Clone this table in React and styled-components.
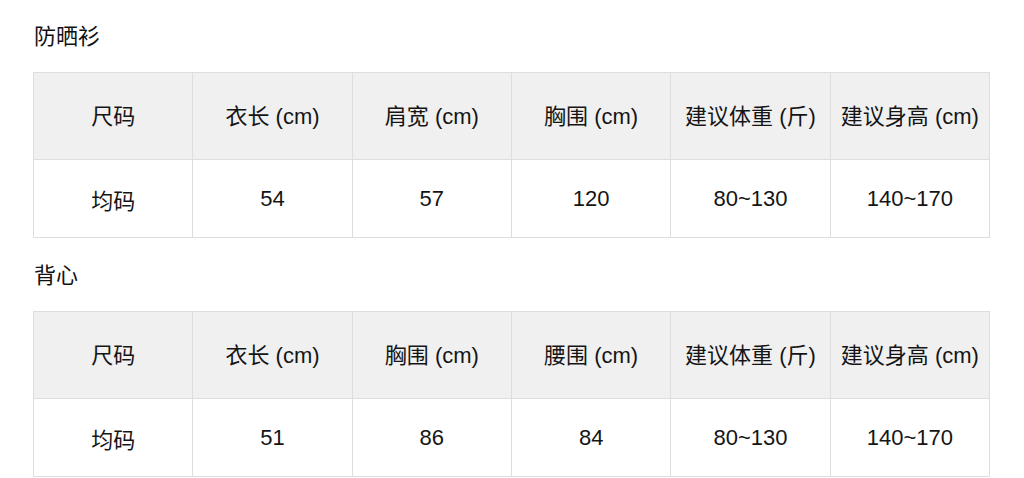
import React from "react";
import styled, { createGlobalStyle } from "styled-components";

const Global = createGlobalStyle`
  html, body { margin: 0; padding: 0; background: #fff; }
  body {
    font-family: "Liberation Sans", "Noto Sans CJK SC", sans-serif;
    color: #222;
  }
`;

const Page = styled.div`
  padding: 22px 0 0 33px;
  width: 957px;
`;

const Section = styled.section`
  & + & { margin-top: 23px; }
`;

const Title = styled.h2`
  margin: 0 0 20px 1px;
  font-size: 22px;
  line-height: 30px;
  font-weight: 400;
  color: #111;
`;

const Table = styled.table`
  width: 957px;
  border-collapse: collapse;
  table-layout: fixed;
  border: 1px solid #dedede;
`;

const Cell = styled.td`
  box-sizing: border-box;
  border: 1px solid #dedede;
  text-align: center;
  vertical-align: middle;
  font-size: 22px;
  font-weight: 400;
  padding: 0 0 ${(p) => (p.$head ? "4px" : "0")} 0;
  color: #151515;
  height: ${(p) => (p.$head ? "87px" : "78px")};
  background: ${(p) => (p.$head ? "#f0f0f0" : "#fff")};
  white-space: nowrap;
`;

const data = [
  {
    title: "防晒衫",
    head: ["尺码", "衣长 (cm)", "肩宽 (cm)", "胸围 (cm)", "建议体重 (斤)", "建议身高 (cm)"],
    row: ["均码", "54", "57", "120", "80~130", "140~170"],
  },
  {
    title: "背心",
    head: ["尺码", "衣长 (cm)", "胸围 (cm)", "腰围 (cm)", "建议体重 (斤)", "建议身高 (cm)"],
    row: ["均码", "51", "86", "84", "80~130", "140~170"],
  },
];

export default function App() {
  return (
    <>
      <Global />
      <Page>
        {data.map((t) => (
          <Section key={t.title}>
            <Title>{t.title}</Title>
            <Table>
              <tbody>
                <tr>
                  {t.head.map((h, i) => (
                    <Cell as="th" $head key={i}>{h}</Cell>
                  ))}
                </tr>
                <tr>
                  {t.row.map((c, i) => (
                    <Cell key={i}>{c}</Cell>
                  ))}
                </tr>
              </tbody>
            </Table>
          </Section>
        ))}
      </Page>
    </>
  );
}
